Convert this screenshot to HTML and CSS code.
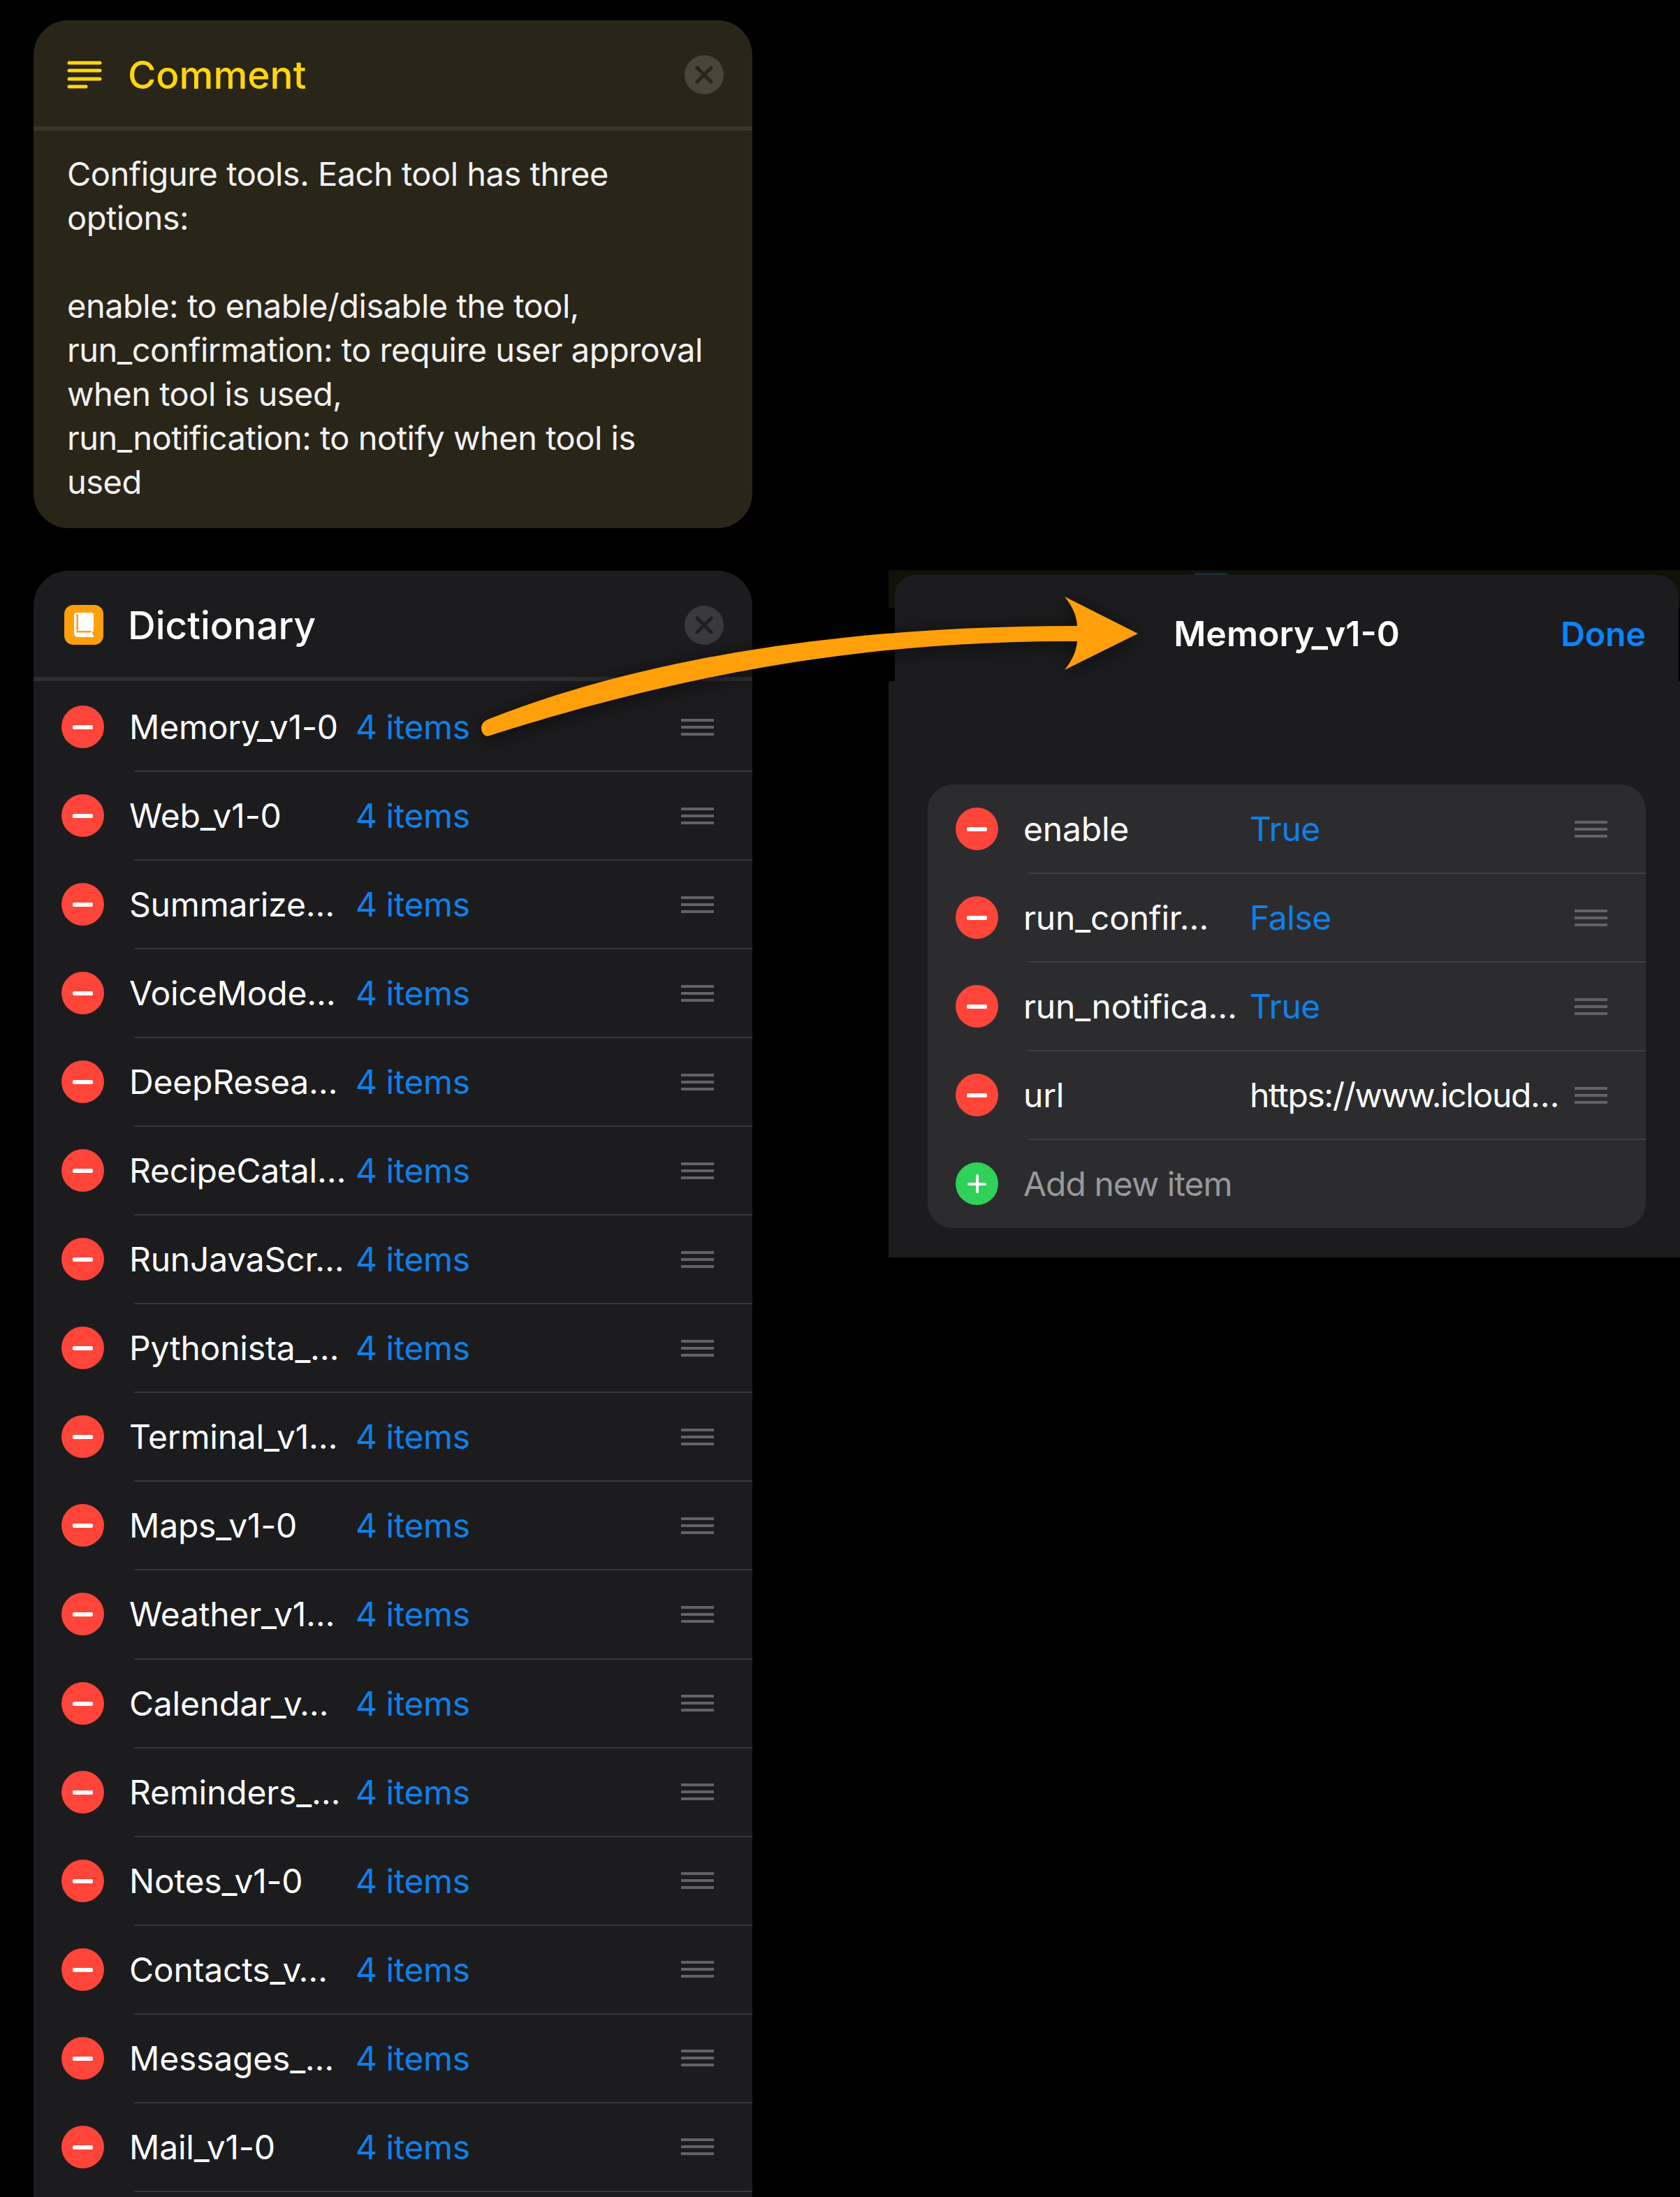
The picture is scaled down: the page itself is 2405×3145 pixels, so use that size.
FILE: index.html
```html
<!DOCTYPE html>
<html>
<head>
    <title>Dictionary</title>
    <link rel="stylesheet" href="styles.css">
</head>
<body>
    <div class="page">
        <div class="left">
            <div class="card comment">
                <div class="card-head">
                    <svg class="head-icon" viewBox="0 0 56 57">
                        <g stroke="#ffd60a" stroke-width="5" stroke-linecap="round">
                            <line x1="7" y1="12" x2="51" y2="12"/>
                            <line x1="7" y1="23" x2="51" y2="23"/>
                            <line x1="7" y1="35" x2="51" y2="35"/>
                            <line x1="7" y1="46" x2="31" y2="46"/>
                        </g>
                    </svg>
                    <span class="card-title">Comment</span>
                    <svg class="close" viewBox="0 0 56 56">
                        <circle class="close-bg" cx="28" cy="28" r="28"/>
                        <path class="close-x" d="M18 18L38 38M38 18L18 38"/>
                    </svg>
                </div>
                <div class="comment-text">
                    Configure tools. Each tool has three<br>
                    options:<br>
                    <br>
                    enable: to enable/disable the tool,<br>
                    run_confirmation: to require user approval<br>
                    when tool is used,<br>
                    run_notification: to notify when tool is<br>
                    used
                </div>
            </div>

            <div class="card dict">
                <div class="card-head">
                    <svg class="head-icon" viewBox="0 0 56 57">
                        <rect width="56" height="57" rx="13" fill="#ff9f0a"/>
                        <path fill="#fff" d="M18 11H39a3 3 0 0 1 3 3V36c0 1.200-.6 2-2 2.400 .3 2.400 1 4.600 2.500 7.600H20c-4 0-6-2-6-6V15c0-2.500 1.500-4 4-4z"/>
                        <rect x="17.500" y="13.500" width="2.500" height="23" fill="#ff9f0a"/>
                        <rect x="17.500" y="37" width="21" height="2.500" fill="#ff9f0a"/>
                    </svg>
                    <span class="card-title">Dictionary</span>
                    <svg class="close" viewBox="0 0 56 56">
                        <circle class="close-bg" cx="28" cy="28" r="28"/>
                        <path class="close-x" d="M18 18L38 38M38 18L18 38"/>
                    </svg>
                </div>
                <div class="rows">
                    <div class="row"><span class="minus"></span><span class="name">Memory_v1-0</span><span class="value">4 items</span><span class="grab"></span></div>
                    <div class="row"><span class="minus"></span><span class="name">Web_v1-0</span><span class="value">4 items</span><span class="grab"></span></div>
                    <div class="row"><span class="minus"></span><span class="name">Summarize…</span><span class="value">4 items</span><span class="grab"></span></div>
                    <div class="row"><span class="minus"></span><span class="name">VoiceMode…</span><span class="value">4 items</span><span class="grab"></span></div>
                    <div class="row"><span class="minus"></span><span class="name">DeepResea…</span><span class="value">4 items</span><span class="grab"></span></div>
                    <div class="row"><span class="minus"></span><span class="name">RecipeCatal…</span><span class="value">4 items</span><span class="grab"></span></div>
                    <div class="row"><span class="minus"></span><span class="name">RunJavaScr…</span><span class="value">4 items</span><span class="grab"></span></div>
                    <div class="row"><span class="minus"></span><span class="name">Pythonista_…</span><span class="value">4 items</span><span class="grab"></span></div>
                    <div class="row"><span class="minus"></span><span class="name">Terminal_v1…</span><span class="value">4 items</span><span class="grab"></span></div>
                    <div class="row"><span class="minus"></span><span class="name">Maps_v1-0</span><span class="value">4 items</span><span class="grab"></span></div>
                    <div class="row"><span class="minus"></span><span class="name">Weather_v1…</span><span class="value">4 items</span><span class="grab"></span></div>
                    <div class="row"><span class="minus"></span><span class="name">Calendar_v…</span><span class="value">4 items</span><span class="grab"></span></div>
                    <div class="row"><span class="minus"></span><span class="name">Reminders_…</span><span class="value">4 items</span><span class="grab"></span></div>
                    <div class="row"><span class="minus"></span><span class="name">Notes_v1-0</span><span class="value">4 items</span><span class="grab"></span></div>
                    <div class="row"><span class="minus"></span><span class="name">Contacts_v…</span><span class="value">4 items</span><span class="grab"></span></div>
                    <div class="row"><span class="minus"></span><span class="name">Messages_…</span><span class="value">4 items</span><span class="grab"></span></div>
                    <div class="row"><span class="minus"></span><span class="name">Mail_v1-0</span><span class="value">4 items</span><span class="grab"></span></div>
                </div>
            </div>
        </div>

        <div class="sheet">
            <div class="sheet-head">
                <span class="sheet-notch"></span>
                <div class="sheet-bar">
                    <span></span>
                    <span class="sheet-title">Memory_v1-0</span>
                    <span class="done">Done</span>
                </div>
            </div>
            <div class="group">
                <div class="row"><span class="minus"></span><span class="name">enable</span><span class="value">True</span><span class="grab"></span></div>
                <div class="row"><span class="minus"></span><span class="name">run_confir…</span><span class="value">False</span><span class="grab"></span></div>
                <div class="row"><span class="minus"></span><span class="name">run_notifica…</span><span class="value">True</span><span class="grab"></span></div>
                <div class="row"><span class="minus"></span><span class="name">url</span><span class="value plain">https://www.icloud…</span><span class="grab"></span></div>
                <div class="row last"><span class="plus"></span><span class="name add">Add new item</span></div>
            </div>
        </div>

        <svg class="arrow" viewBox="0 0 2405 3145">
            <path fill="#ff9f0a" d="M698 1030C900 950 1180 896 1542 896C1541 880 1535 868 1524 854L1629 907L1524 959C1535 945 1541 932 1542 918C1180 916 900 990 701 1053C695 1056 689 1050 689 1042C689 1037 692 1033 698 1030Z"/>
        </svg>
    </div>
</body>
</html>
```

FILE: styles.css
```css
body {
    margin: 0;
    background-color: #000;
    font-family: Inter, "Liberation Sans", sans-serif;
    color: #fff;
}

.page {
    position: relative;
    display: flex;
    gap: 195px;
    height: 3145px;
    padding: 29px 0 0 48px;
    box-sizing: border-box;
    overflow: hidden;
}

.left {
    display: flex;
    flex-direction: column;
    gap: 61px;
    width: 1029px;
    flex-shrink: 0;
}

.card {
    border-radius: 50px;
}

.comment {
    height: 727px;
    background-color: #2a2519;
}

.dict {
    flex: 1;
    background-color: #1c1c1e;
    border-radius: 50px 50px 0 0;
}

.card-head {
    display: flex;
    align-items: center;
    height: 158px;
    padding: 3px 41px 0 44px;
    box-sizing: border-box;
    border-bottom: 6px solid #3a3527;
}

.dict .card-head {
    border-bottom-color: #2f2f33;
}

.head-icon {
    width: 56px;
    height: 57px;
    flex-shrink: 0;
}

.card-title {
    flex: 1;
    margin-left: 35px;
    font-size: 55px;
    font-weight: 500;
}

.comment .card-title {
    color: #ffd60a;
}

.close {
    width: 56px;
    height: 56px;
}

.close-bg {
    fill: #4a4538;
}

.dict .close-bg {
    fill: #3a3a3e;
}

.close-x {
    fill: none;
    stroke: #2a2519;
    stroke-width: 5;
    stroke-linecap: round;
}

.dict .close-x {
    stroke: #1f1f22;
}

.comment-text {
    padding: 30px 0 0 48px;
    font-size: 47px;
    letter-spacing: -0.5px;
    line-height: 63px;
    color: #f2f2f2;
    white-space: nowrap;
}

.rows {
    padding-top: 2px;
}

.row {
    position: relative;
    display: flex;
    align-items: center;
    height: 127.060px;
    padding-left: 40px;
    box-sizing: border-box;
    font-size: 48px;
    letter-spacing: -0.45px;
}

.row::after {
    content: "";
    position: absolute;
    left: 144px;
    right: 0;
    bottom: -1px;
    height: 2px;
    background-color: #38383a;
}

.row.last::after {
    display: none;
}

.minus,
.plus {
    position: relative;
    display: block;
    width: 61px;
    height: 61px;
    border-radius: 50%;
    flex-shrink: 0;
    background-color: #ff453a;
}

.minus::before {
    content: "";
    position: absolute;
    left: 16px;
    top: 28px;
    width: 29px;
    height: 6px;
    border-radius: 2px;
    background-color: #fff;
}

.plus {
    background-color: #30d158;
}

.plus::before,
.plus::after {
    content: "";
    position: absolute;
    border-radius: 2px;
    background-color: #fff;
}

.plus::before {
    left: 17px;
    top: 28.500px;
    width: 27px;
    height: 4px;
}

.plus::after {
    left: 28.500px;
    top: 17px;
    width: 4px;
    height: 27px;
}

.name {
    width: 324px;
    margin-left: 36px;
    letter-spacing: -0.2px;
    white-space: nowrap;
    flex-shrink: 0;
}

.name.add {
    color: #98989d;
    letter-spacing: -1px;
}

.value {
    flex: 1;
    min-width: 0;
    color: #0f80ea;
    white-space: nowrap;
}

.value.plain {
    color: #fff;
    letter-spacing: -1.4px;
}

.grab {
    width: 47px;
    height: 24px;
    margin-right: 55px;
    flex-shrink: 0;
    box-sizing: border-box;
    border-top: 4px solid #636366;
    border-bottom: 4px solid #636366;
    background: linear-gradient(#636366, #636366) center / 100% 4px no-repeat;
}

.sheet {
    flex: 1;
    height: 984px;
    margin-top: 787px;
    background-color: #1c1c1e;
}

.sheet-head {
    position: relative;
    padding: 7px 2px 0 9px;
    height: 159px;
    box-sizing: border-box;
    background: linear-gradient(#11110c 0 54px, #000 54px);
}

.sheet-notch {
    position: absolute;
    left: 438px;
    top: 4px;
    width: 47px;
    height: 3px;
    background-color: #1b2a36;
}

.sheet-bar {
    display: grid;
    grid-template-columns: 1fr auto 1fr;
    align-items: center;
    height: 152px;
    padding: 16px 47px 0;
    box-sizing: border-box;
    background-color: #1c1c1e;
    border-radius: 30px 30px 0 0;
}

.sheet-title {
    font-size: 50px;
    font-weight: 600;
}

.done {
    justify-self: end;
    font-size: 48px;
    font-weight: 600;
    color: #0a84ff;
}

.group {
    width: 1028px;
    margin: 148px 0 0 56px;
    background-color: #2c2c2e;
    border-radius: 36px;
}

.group .row::after {
    background-color: #404043;
}

.arrow {
    position: absolute;
    left: 0;
    top: 0;
    width: 2405px;
    height: 3145px;
    filter: drop-shadow(0 4px 14px rgba(0, 0, 0, 0.55));
}
```
